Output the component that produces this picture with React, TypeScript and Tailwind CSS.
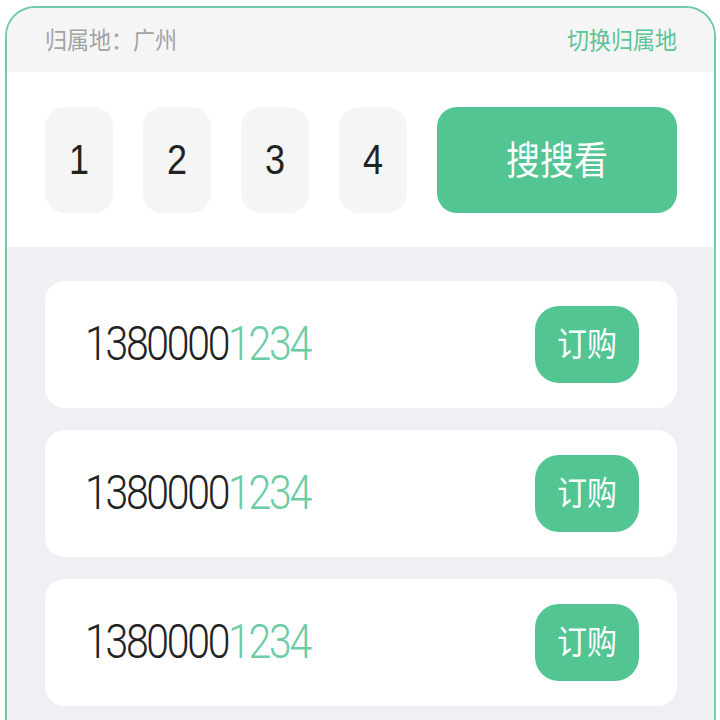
const digits = ["1", "2", "3", "4"];
const numbers = ["1380000", "1380000", "1380000"];

const cjk = "font-['Liberation_Sans','Noto_Sans_CJK_SC',sans-serif]";

export default function App() {
  return (
    <div className="h-[720px] overflow-hidden bg-white pl-[5px] pr-[4px] pt-[6px]">
      <div className="h-full overflow-hidden rounded-t-[30px] border-2 border-b-0 border-[#70cba6] bg-[#f0f0f4]">
        <div className={`flex h-[64px] items-center justify-between bg-[#f5f5f5] pl-[38px] pr-[37px] text-[22px] ${cjk}`}>
          <span className="inline-block scale-y-[1.1] text-[#a3a3a3]">归属地：广州</span>
          <span className="inline-block scale-y-[1.1] text-[#5cc497]">切换归属地</span>
        </div>

        <div className="flex gap-[30px] bg-white pt-[35px] pb-[34px] pl-[38px] pr-[37px]">
          {digits.map((d) => (
            <div
              key={d}
              className="flex h-[106px] w-[68px] items-center justify-center rounded-[20px] bg-[#f5f5f5] font-['Liberation_Sans',sans-serif] text-[36px] text-[#222]"
            >
              <span className="inline-block scale-y-[1.16]">{d}</span>
            </div>
          ))}
          <button className={`flex h-[106px] flex-1 items-center justify-center rounded-[20px] bg-[#52c593] text-[34px] text-white ${cjk}`}>
            <span className="inline-block scale-y-[1.15]">搜搜看</span>
          </button>
        </div>

        <div className="flex flex-col gap-[22px] pt-[34px] pl-[38px] pr-[37px]">
          {numbers.map((n, i) => (
            <div
              key={i}
              className="flex h-[127px] shrink-0 items-center justify-between rounded-[20px] bg-white pl-[40px] pr-[38px]"
            >
              <span className="inline-block scale-y-[1.16] font-['Roboto',sans-serif] text-[41px] font-light tracking-[-2.3px] text-[#222]">
                {n}
                <span className="text-[#6ccca5]">1234</span>
              </span>
              <button className={`flex h-[77px] w-[104px] items-center justify-center rounded-[24px] bg-[#52c593] text-[30px] text-white ${cjk}`}>
                <span className="inline-block scale-y-[1.1]">订购</span>
              </button>
            </div>
          ))}
        </div>
      </div>
    </div>
  );
}
